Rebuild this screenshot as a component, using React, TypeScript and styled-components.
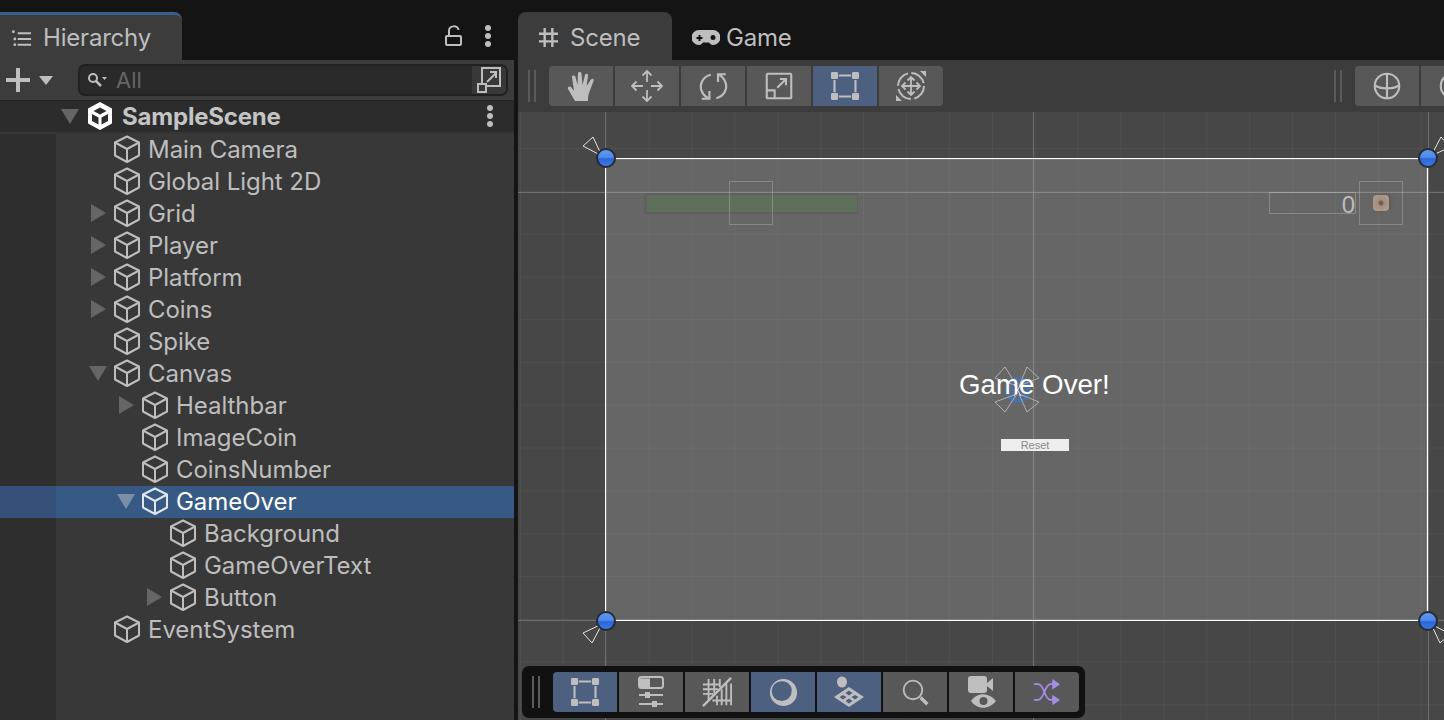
import React from 'react';
import styled, { createGlobalStyle } from 'styled-components';

const GlobalStyle = createGlobalStyle`
  html, body { margin: 0; padding: 0; background: #141414; }
  #root { width: 1444px; height: 720px; overflow: hidden; }
`;

const Page = styled.div`
  display: grid;
  grid-template-columns: 514px 1fr;
  column-gap: 4px;
  width: 1444px;
  height: 720px;
  background: #141414;
  font-family: Inter, 'Liberation Sans', sans-serif;
  color: #bebebe;
  overflow: hidden;
`;

const Column = styled.div`
  display: flex;
  flex-direction: column;
  min-width: 0;
`;

const TabStrip = styled.div`
  display: flex;
  align-items: flex-end;
  height: 60px;
  flex: none;
  padding-right: 22px;
`;

const Tab = styled.div<{ $w: number; $active?: boolean; $blue?: boolean; $gap?: number }>`
  display: flex;
  align-items: center;
  gap: ${({ $gap }) => $gap ?? 11}px;
  box-sizing: border-box;
  width: ${({ $w }) => $w}px;
  height: 48px;
  padding: ${({ $blue }) => ($blue ? '0 0 0 11px' : '2px 0 0 20px')};
  font-size: 24px;
  letter-spacing: -0.2px;
  background: ${({ $active }) => ($active ? '#3c3c3c' : 'transparent')};
  border-top: ${({ $blue }) => ($blue ? '3px solid #38608d' : 'none')};
  border-radius: ${({ $blue }) => ($blue ? '0 8px 0 0' : '8px 8px 0 0')};
`;

const TabActions = styled.div`
  display: flex;
  align-items: center;
  gap: 21px;
  margin-left: auto;
  height: 48px;
  padding-bottom: 1px;
  box-sizing: border-box;
`;

const Icon = styled.svg<{ $w?: number; $h?: number; $c?: string; $sw?: number }>`
  display: block;
  flex: none;
  width: ${({ $w }) => $w ?? 32}px;
  height: ${({ $h, $w }) => $h ?? $w ?? 32}px;
  color: ${({ $c }) => $c ?? '#bebebe'};
  fill: none;
  stroke: currentColor;
  stroke-width: ${({ $sw }) => $sw ?? 2};
`;

const SearchBar = styled.div`
  display: flex;
  align-items: center;
  height: 40px;
  flex: none;
  background: #3c3c3c;
  padding: 0 6px;
  box-sizing: border-box;
`;

const AddButton = styled.div`
  display: flex;
  align-items: center;
  gap: 9px;
  width: 72px;
  flex: none;
`;

const SearchField = styled.div`
  display: flex;
  align-items: center;
  flex: 1;
  height: 32px;
  background: #2a2a2a;
  border: 2px solid #212121;
  border-radius: 7px;
  box-sizing: border-box;
  padding-left: 7px;
  overflow: hidden;
`;

const SearchText = styled.span`
  margin-left: 9px;
  font-size: 22px;
  color: #666;
  flex: 1;
`;

const SearchAction = styled.div`
  display: flex;
  align-items: center;
  justify-content: center;
  width: 34px;
  height: 100%;
  background: #383838;
`;

const SceneRow = styled.div`
  display: flex;
  align-items: center;
  height: 34px;
  flex: none;
  box-sizing: border-box;
  padding-left: 56px;
  padding-right: 20px;
  padding-bottom: 1px;
  background: #2c2c2c;
  border-top: 1px solid #262626;
  border-bottom: 2px solid #353535;
  font-size: 24px;
  font-weight: 700;
  color: #c4c4c4;
`;

const LogoSlot = styled.div`
  margin-left: 3px;
  flex: none;
`;

const SceneName = styled.span`
  margin-left: 9px;
  flex: 1;
  letter-spacing: -0.2px;
`;

const TreeList = styled.div`
  flex: 1;
  background: linear-gradient(90deg, #2e2e2e 56px, #383838 56px);
`;

const Row = styled.div<{ $depth: number; $selected?: boolean }>`
  display: flex;
  align-items: center;
  box-sizing: border-box;
  height: 32px;
  padding-bottom: 2px;
  padding-left: ${({ $depth }) => 84 + $depth * 28}px;
  font-size: 24px;
  letter-spacing: -0.05px;
  color: ${({ $selected }) => ($selected ? '#ffffff' : '#bebebe')};
  background: ${({ $selected }) =>
    $selected ? 'linear-gradient(90deg, #36507a 56px, #365a84 56px)' : 'transparent'};
`;

const ArrowSlot = styled.div`
  display: flex;
  align-items: center;
  justify-content: center;
  width: 28px;
  height: 30px;
  flex: none;
`;

const Triangle = styled.svg<{ $light?: boolean }>`
  width: 20px;
  height: 20px;
  fill: ${({ $light }) => ($light ? '#7a8ea8' : '#656565')};
`;

const RowLabel = styled.span`
  margin-left: 6px;
  white-space: nowrap;
`;

const ToolStrip = styled.div`
  display: flex;
  align-items: center;
  height: 52px;
  flex: none;
  padding-left: 10px;
  box-sizing: border-box;
  background: #3c3c3c;
  overflow: hidden;
`;

const Grip = styled.div<{ $gap?: number }>`
  flex: none;
  width: 8px;
  height: 32px;
  margin-right: ${({ $gap }) => $gap ?? 13}px;
  box-sizing: border-box;
  border-left: 2px solid #5b5b5b;
  border-right: 2px solid #5b5b5b;
`;

const ToolGroup = styled.div<{ $left?: string }>`
  display: flex;
  align-items: center;
  gap: 2px;
  flex: none;
  margin-left: ${({ $left }) => $left ?? '0'};
`;

const ToolButton = styled.div<{ $on?: boolean; $first?: boolean; $last?: boolean }>`
  display: flex;
  align-items: center;
  justify-content: center;
  width: 64px;
  height: 40px;
  flex: none;
  background: ${({ $on }) => ($on ? '#4d6080' : '#585858')};
  border-radius: ${({ $first, $last }) =>
    `${$first ? 4 : 0}px ${$last ? 4 : 0}px ${$last ? 4 : 0}px ${$first ? 4 : 0}px`};
`;

const Viewport = styled.div`
  position: relative;
  flex: 1;
  overflow: hidden;
  background-color: #474747;
  background-image:
    linear-gradient(90deg, rgba(255, 255, 255, 0.04) 1px, transparent 1px),
    linear-gradient(0deg, rgba(255, 255, 255, 0.04) 1px, transparent 1px);
  background-size: 42.9px 42.8px;
  background-position: 2px 37px;
`;

const AxisV = styled.div<{ $x: number }>`
  position: absolute;
  top: 0;
  bottom: 0;
  left: ${({ $x }) => $x}px;
  width: 1px;
  background: #707070;
`;

const AxisH = styled.div<{ $y: number }>`
  position: absolute;
  left: 0;
  right: 0;
  top: ${({ $y }) => $y}px;
  height: 1px;
  background: #707070;
`;

const CanvasRect = styled.div`
  position: absolute;
  left: 87px;
  top: 46px;
  width: 823px;
  height: 463px;
  box-sizing: border-box;
  background: rgba(255, 255, 255, 0.17);
  border: 1px solid #ffffff;
  box-shadow: inset 0 0 0 1px rgba(255, 255, 255, 0.12);
`;

const Handle = styled.div<{ $x: number; $y: number }>`
  position: absolute;
  left: ${({ $x }) => $x - 10}px;
  top: ${({ $y }) => $y - 10}px;
  width: 20px;
  height: 20px;
  box-sizing: border-box;
  border-radius: 50%;
  border: 2px solid #252a33;
  background: linear-gradient(180deg, #5f97ee 0%, #4f8aea 45%, #2c66d8 55%, #3c78e4 100%);
`;

const HandleFin = styled.svg<{ $x: number; $y: number; $r: number }>`
  position: absolute;
  left: ${({ $x }) => $x}px;
  top: ${({ $y }) => $y}px;
  width: 24px;
  height: 24px;
  transform: rotate(${({ $r }) => $r}deg);
  fill: none;
  stroke: #e4e4e4;
  stroke-width: 1;
`;

const Outline = styled.div<{ $x: number; $y: number; $w: number; $h: number }>`
  position: absolute;
  left: ${({ $x }) => $x}px;
  top: ${({ $y }) => $y}px;
  width: ${({ $w }) => $w}px;
  height: ${({ $h }) => $h}px;
  box-sizing: border-box;
  border: 1px solid rgba(255, 255, 255, 0.22);
`;

const HealthBar = styled.div`
  position: absolute;
  left: 126px;
  top: 81px;
  width: 214px;
  height: 21px;
  box-sizing: border-box;
  padding: 2px 1px 2px 3px;
  background: #5f5f5f;
`;

const HealthFill = styled.div`
  height: 100%;
  background: #5f6f5c;
`;

const CoinCount = styled.div`
  position: absolute;
  left: 751px;
  top: 80px;
  width: 87px;
  height: 22px;
  box-sizing: border-box;
  border: 1px solid rgba(255, 255, 255, 0.22);
  font: 24px/23px 'Liberation Sans', sans-serif;
  color: #bcbcbc;
  text-align: right;
`;

const Coin = styled.div`
  position: absolute;
  left: 855px;
  top: 83px;
  width: 16px;
  height: 16px;
  border-radius: 4px;
  background: radial-gradient(circle, #7c5f52 0 2px, #a28c7e 3px, #b5a08f 100%);
  box-shadow: 2px 0 3px rgba(60, 60, 60, 0.25);
`;

const GameOverText = styled.div`
  position: absolute;
  left: 441px;
  top: 255px;
  font: 27.7px/36px 'Liberation Sans', sans-serif;
  color: #ffffff;
  white-space: nowrap;
`;

const GizmoRing = styled.div`
  position: absolute;
  left: 487px;
  top: 265px;
  width: 26px;
  height: 26px;
  box-sizing: border-box;
  border-radius: 50%;
  border: 4px solid #4a70aa;
  background: rgba(74, 112, 170, 0.45);
`;

const Gizmo = styled.svg`
  position: absolute;
  left: 474px;
  top: 254px;
  width: 52px;
  height: 48px;
  fill: none;
  stroke: #b0b0b0;
  stroke-width: 1;
`;

const ResetButton = styled.div`
  position: absolute;
  left: 483px;
  top: 327px;
  width: 68px;
  height: 12px;
  background: #eeeeee;
  font: 11px/13px 'Liberation Sans', sans-serif;
  color: #8a8a8a;
  text-align: center;
`;

const OverlayBar = styled.div`
  position: absolute;
  left: 4px;
  bottom: 2px;
  display: flex;
  align-items: center;
  height: 52px;
  padding: 0 6px 0 10px;
  background: #111111;
  border-radius: 7px;
`;

const Cube = ({ c }: { c?: string }) => (
  <Icon viewBox="0 0 30 30" $w={30} $c={c} strokeLinejoin="round">
    <path d="M15 2.500 27 8.500V21.500L15 28 3 21.500V8.500Z" />
    <path d="M3 8.500 15 15 27 8.500M15 15V28" />
  </Icon>
);

const UnityLogo = () => (
  <Icon viewBox="0 0 26 28" $w={26} $h={28} $c="#fff">
    <path
      stroke="none"
      fill="currentColor"
      fillRule="evenodd"
      d="M13 0 25 6.500V21.500L13 28 1 21.500V6.500ZM13 5.500 6.500 9 13 12.500 19.500 9ZM5 12V19L11.500 22.500V15.500ZM21 12 14.500 15.500V22.500L21 19Z"
    />
  </Icon>
);

const Kebab = () => (
  <Icon viewBox="0 0 8 24" $w={8} $h={24}>
    <circle cx="4" cy="4" r="3" fill="currentColor" stroke="none" />
    <circle cx="4" cy="12" r="3" fill="currentColor" stroke="none" />
    <circle cx="4" cy="20" r="3" fill="currentColor" stroke="none" />
  </Icon>
);

const Arrow = ({ open, light }: { open?: boolean; light?: boolean }) => (
  <Triangle viewBox="0 0 20 20" $light={light}>
    {open ? <path d="M1 3H19L10 18Z" /> : <path d="M3 1 18 10 3 19Z" />}
  </Triangle>
);

const RectIcon = () => (
  <Icon viewBox="0 0 32 32" $w={28} $sw={2.400}>
    <path d="M9 4H23M9 28H23M4 9V23M28 9V23" />
    <g fill="currentColor" stroke="none">
      <rect x="0" y="0" width="8" height="8" rx="1.500" />
      <rect x="24" y="0" width="8" height="8" rx="1.500" />
      <rect x="0" y="24" width="8" height="8" rx="1.500" />
      <rect x="24" y="24" width="8" height="8" rx="1.500" />
    </g>
  </Icon>
);

const topTools: React.ReactNode[] = [
  <Icon viewBox="0 0 32 32" key="hand">
    <path
      stroke="none"
      fill="currentColor"
      d="M10 31 3 19C2 17 4.500 15.500 6 17L9 21 7 7C7 5 10 5 10.500 7L12.500 15 13 3.500C13 1.500 16 1.500 16.500 3.500L17.500 15 20 5C20.500 3 23.500 3.500 23 6L21.500 16 26 9.500C27 8 29.500 9 28.500 11L24 23C23 26 23 28 23 31Z"
    />
  </Icon>,
  <Icon viewBox="0 0 32 32" key="move" $sw={1.800}>
    <path d="M16 1V12M16 20V31M1 16H12M20 16H31M11.500 5.500 16 1 20.500 5.500M11.500 26.500 16 31 20.500 26.500M5.500 11.500 1 16 5.500 20.500M26.500 11.500 31 16 26.500 20.500" />
  </Icon>,
  <Icon viewBox="0 0 32 32" key="rotate" $w={29} $sw={2.400}>
    <path d="M13 3C4 5 0 14 3 21 4 24 7 27 10 29" />
    <path d="M19 29C28 27 32 18 29 11 28 8 25 5 22 3" />
    <path d="M3 29.500H11.500V21M21 11V2.500H29.500" />
  </Icon>,
  <Icon viewBox="0 0 32 32" key="scale" $w={28} $sw={2.400}>
    <rect x="2" y="2" width="28" height="28" rx="1" />
    <path d="M2 21H11V30M14 18 24 8M17 8H24V15" />
  </Icon>,
  <RectIcon key="rect" />,
  <Icon viewBox="0 0 32 32" key="transform" $sw={1.800}>
    <circle cx="16" cy="16" r="13" strokeDasharray="17 3.400" strokeWidth={2} />
    <path d="M16 7V25M7 16H25M12.500 10.500 16 7 19.500 10.500M12.500 21.500 16 25 19.500 21.500M10.500 12.500 7 16 10.500 19.500M21.500 12.500 25 16 21.500 19.500" />
    <path stroke="none" fill="currentColor" d="M25 1H31V7ZM1 31V25L7 31Z" />
  </Icon>,
];

const bottomTools: { icon: React.ReactNode; on?: boolean }[] = [
  { icon: <RectIcon />, on: true },
  {
    icon: (
      <Icon viewBox="0 0 32 32">
        <rect x="4" y="1" width="24" height="11" rx="2.500" fill="none" />
        <path d="M5 2.500H15V11H5Z" fill="currentColor" stroke="none" />
        <path d="M4 19H28M4 28H28" />
        <rect x="10" y="16" width="5" height="6" fill="currentColor" stroke="none" />
        <rect x="17" y="25" width="5" height="6" fill="currentColor" stroke="none" />
      </Icon>
    ),
  },
  {
    icon: (
      <Icon viewBox="0 0 32 32" $w={30}>
        <path d="M1 31 31 1" strokeWidth={2.500} />
        <path d="M1 8H20M1 13H17M1 18H12M7 2V24M13 2V17M19 2V11M21 13V30M26 7V30M31 7V30M16 20V30M11 25H31" />
      </Icon>
    ),
  },
  {
    icon: (
      <Icon viewBox="0 0 32 32" $w={29}>
        <path
          stroke="none"
          fill="currentColor"
          fillRule="evenodd"
          d="M16 1A15 15 0 1 1 16 31 15 15 0 0 1 16 1ZM14 3.500A11 11 0 1 0 14 25.500 11 11 0 0 0 25 14.500C25.500 10 23 7 20 5 18 4 16 3.500 14 3.500Z"
        />
      </Icon>
    ),
    on: true,
  },
  {
    icon: (
      <Icon viewBox="0 0 32 32">
        <ellipse cx="9" cy="6" rx="5" ry="5.500" fill="currentColor" stroke="none" />
        <path
          stroke="none"
          fill="currentColor"
          fillRule="evenodd"
          d="M16 11 31 21 16 31 1 21ZM16 14.500 12.500 17 16 19.500 19.500 17ZM10 19 6.500 21 10 23.500 13.500 21ZM22 19 18.500 21 22 23.500 25.500 21ZM16 22.500 12.500 25 16 27.500 19.500 25Z"
        />
      </Icon>
    ),
    on: true,
  },
  {
    icon: (
      <Icon viewBox="0 0 32 32" $w={27}>
        <circle cx="13" cy="13" r="11" strokeWidth={2.200} />
        <path d="M22 22 30 30" strokeWidth={4} />
      </Icon>
    ),
  },
  {
    icon: (
      <Icon viewBox="0 0 32 32">
        <rect x="3" y="0" width="19" height="17" rx="3" fill="currentColor" stroke="none" />
        <path d="M22 7 28 2V15L22 10Z" fill="currentColor" stroke="none" />
        <path
          stroke="none"
          fill="currentColor"
          fillRule="evenodd"
          d="M6 25C12 16 24 16 31 25 24 34 12 34 6 25ZM18.500 21A4 4 0 1 0 18.500 29 4 4 0 0 0 18.500 21Z"
        />
      </Icon>
    ),
  },
  {
    icon: (
      <Icon viewBox="0 0 32 32" $w={28} $c="#a48fe8">
        <path d="M1 7H6C13 7 13 25 20 25H25M1 25H6C13 25 13 7 20 7H25" />
        <path d="M22 1 31 7 22 13ZM22 19 31 25 22 31Z" fill="currentColor" stroke="none" />
      </Icon>
    ),
  },
];

const tree = [
  { name: 'Main Camera', depth: 0 },
  { name: 'Global Light 2D', depth: 0 },
  { name: 'Grid', depth: 0, arrow: 'right' },
  { name: 'Player', depth: 0, arrow: 'right' },
  { name: 'Platform', depth: 0, arrow: 'right' },
  { name: 'Coins', depth: 0, arrow: 'right' },
  { name: 'Spike', depth: 0 },
  { name: 'Canvas', depth: 0, arrow: 'down' },
  { name: 'Healthbar', depth: 1, arrow: 'right' },
  { name: 'ImageCoin', depth: 1 },
  { name: 'CoinsNumber', depth: 1 },
  { name: 'GameOver', depth: 1, arrow: 'down', selected: true },
  { name: 'Background', depth: 2 },
  { name: 'GameOverText', depth: 2 },
  { name: 'Button', depth: 2, arrow: 'right' },
  { name: 'EventSystem', depth: 0 },
];

const App: React.FC = () => (
  <Page>
    <GlobalStyle />
    <Column>
      <TabStrip>
        <Tab $w={182} $active $blue>
          <Icon viewBox="0 0 22 18" $w={21} $h={18}>
            <path d="M7 4H21M7 10H21M7 16H21" />
            <circle cx="2.500" cy="2.500" r="1.500" fill="currentColor" stroke="none" />
            <circle cx="4" cy="10" r="1.500" fill="currentColor" stroke="none" />
            <circle cx="4" cy="16" r="1.500" fill="currentColor" stroke="none" />
          </Icon>
          Hierarchy
        </Tab>
        <TabActions>
          <Icon viewBox="0 0 18 22" $w={18} $h={22}>
            <rect x="1" y="11" width="15" height="9" rx="1" />
            <path d="M4 11V6C4 0 13 0 13.500 5" />
          </Icon>
          <Kebab />
        </TabActions>
      </TabStrip>
      <SearchBar>
        <AddButton>
          <Icon viewBox="0 0 24 24" $w={24} $sw={4}>
            <path d="M12 0V24M0 12H24" />
          </Icon>
          <Icon viewBox="0 0 14 9" $w={14} $h={9}>
            <path d="M0 0H14L7 9Z" fill="currentColor" stroke="none" />
          </Icon>
        </AddButton>
        <SearchField>
          <Icon viewBox="0 0 20 16" $w={20} $h={16}>
            <circle cx="6" cy="6" r="4" />
            <path d="M9 9 14 14" strokeWidth={2.500} />
            <path d="M15 5H20L17.500 8Z" fill="currentColor" stroke="none" />
          </Icon>
          <SearchText>All</SearchText>
          <SearchAction>
            <Icon viewBox="0 0 24 26" $w={24} $h={26}>
              <path d="M5 17V1H23V19H9" />
              <rect x="1" y="17" width="8" height="8" />
              <path d="M10 15 19 6M13 5H19V11" />
            </Icon>
          </SearchAction>
        </SearchField>
      </SearchBar>
      <SceneRow>
        <ArrowSlot>
          <Arrow open />
        </ArrowSlot>
        <LogoSlot>
          <UnityLogo />
        </LogoSlot>
        <SceneName>SampleScene</SceneName>
        <Kebab />
      </SceneRow>
      <TreeList>
        {tree.map((node) => (
          <Row key={node.name} $depth={node.depth} $selected={node.selected}>
            <ArrowSlot>
              {node.arrow && <Arrow open={node.arrow === 'down'} light={node.selected} />}
            </ArrowSlot>
            <Cube c={node.selected ? '#e2e6ec' : undefined} />
            <RowLabel>{node.name}</RowLabel>
          </Row>
        ))}
      </TreeList>
    </Column>

    <Column>
      <TabStrip>
        <Tab $w={154} $active>
          <Icon viewBox="0 0 22 22" $w={21} $h={21} $sw={2.500}>
            <path d="M7 1V21M15 1V21M1 7H21M1 15H21" />
          </Icon>
          Scene
        </Tab>
        <Tab $w={140} $gap={6}>
          <Icon viewBox="0 0 28 15" $w={28} $h={15}>
            <path
              stroke="none"
              fill="currentColor"
              fillRule="evenodd"
              d="M7 0H21A7.500 7.500 0 0 1 21 15C19 15 18 13.500 17 12.500H11C10 13.500 9 15 7 15A7.500 7.500 0 0 1 7 0ZM6.500 5V7H4.500V9H6.500V11H8.500V9H10.500V7H8.500V5ZM21 5A2.500 2.500 0 1 0 21 10 2.500 2.500 0 0 0 21 5Z"
            />
          </Icon>
          Game
        </Tab>
      </TabStrip>
      <ToolStrip>
        <Grip />
        <ToolGroup>
          {topTools.map((tool, i) => (
            <ToolButton key={i} $on={i === 4} $first={i === 0} $last={i === 5}>
              {tool}
            </ToolButton>
          ))}
        </ToolGroup>
        <ToolGroup $left="391px">
          <Grip $gap={11} />
          <ToolButton $first>
            <Icon viewBox="0 0 32 32" $w={28} $sw={2.400}>
              <circle cx="16" cy="16" r="14" />
              <path d="M16 2V30M2 15C8 20 24 20 30 15" />
            </Icon>
          </ToolButton>
          <ToolButton>
            <Icon viewBox="0 0 32 32" $w={28} $sw={2.400}>
              <circle cx="16" cy="16" r="14" />
            </Icon>
          </ToolButton>
        </ToolGroup>
      </ToolStrip>
      <Viewport>
        <AxisV $x={87} />
        <AxisV $x={515} />
        <AxisV $x={910} />
        <AxisH $y={80} />
        <AxisH $y={508} />
        <CanvasRect />
        <HealthBar>
          <HealthFill />
        </HealthBar>
        <Outline $x={211} $y={69} $w={44} $h={44} />
        <CoinCount>0</CoinCount>
        <Outline $x={841} $y={69} $w={44} $h={44} />
        <Coin />
        <GizmoRing />
        <Gizmo viewBox="0 0 52 48">
          <path d="M25 20 13 1 3 12ZM27 20 35 1 47 12ZM25 28 3 36 13 46ZM27 28 47 36 35 46Z" />
          <path d="M22 18 29 30M29 18 22 30" stroke="#e8e8e8" />
        </Gizmo>
        <GameOverText>Game Over!</GameOverText>
        <ResetButton>Reset</ResetButton>
        <HandleFin viewBox="0 0 24 24" $x={62} $y={22} $r={0}>
          <path d="M22 22 13 3 3 12Z" />
        </HandleFin>
        <HandleFin viewBox="0 0 24 24" $x={62} $y={510} $r={-90}>
          <path d="M22 22 13 3 3 12Z" />
        </HandleFin>
        <HandleFin viewBox="0 0 24 24" $x={911} $y={22} $r={90}>
          <path d="M22 22 13 3 3 12Z" />
        </HandleFin>
        <HandleFin viewBox="0 0 24 24" $x={911} $y={510} $r={180}>
          <path d="M22 22 13 3 3 12Z" />
        </HandleFin>
        <Handle $x={88} $y={46} />
        <Handle $x={910} $y={46} />
        <Handle $x={88} $y={509} />
        <Handle $x={910} $y={509} />
        <OverlayBar>
          <Grip $gap={13} />
          <ToolGroup>
            {bottomTools.map((tool, i) => (
              <ToolButton key={i} $on={tool.on} $first={i === 0} $last={i === bottomTools.length - 1}>
                {tool.icon}
              </ToolButton>
            ))}
          </ToolGroup>
        </OverlayBar>
      </Viewport>
    </Column>
  </Page>
);

export default App;
